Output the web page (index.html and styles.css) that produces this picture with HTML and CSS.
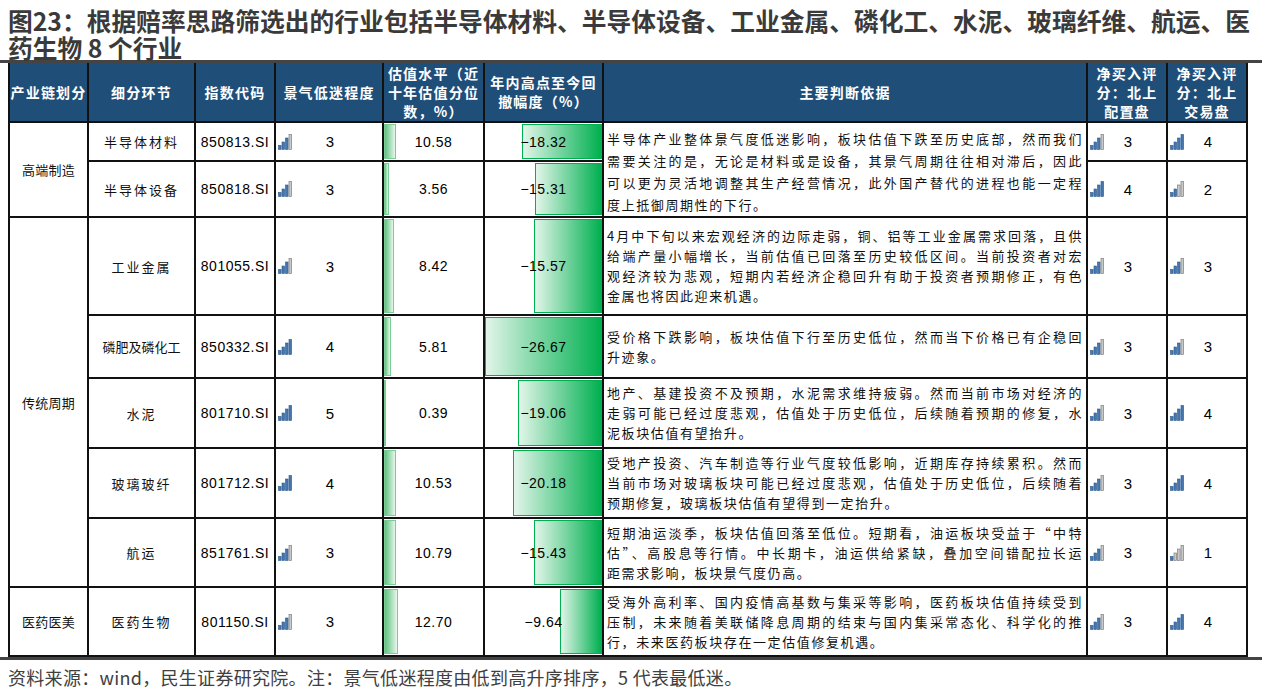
FILE: index.html
```
<!DOCTYPE html>
<html lang="zh-CN">
<head>
<meta charset="utf-8">
<title>图23</title>
<link rel="stylesheet" href="styles.css">
</head>
<body>
<div class="page">
  <h1 class="title"><span class="tl">图23：根据赔率思路筛选出的行业包括半导体材料、半导体设备、工业金属、磷化工、水泥、玻璃纤维、航运、医</span><span class="tl">药生物 8 个行业</span></h1>
  <div class="rule"></div>
  <div class="table">
    <div class="c h">产业链划分</div>
    <div class="c h">细分环节</div>
    <div class="c h">指数代码</div>
    <div class="c h">景气低迷程度</div>
    <div class="c h">估值水平（近<br>十年估值分位<br>数，%）</div>
    <div class="c h">年内高点至今回<br>撤幅度（%）</div>
    <div class="c h">主要判断依据</div>
    <div class="c h">净买入评<br>分：北上<br>配置盘</div>
    <div class="c h">净买入评<br>分：北上<br>交易盘</div>

    <!-- 半导体材料 -->
    <div class="c grp span2">高端制造</div>
    <div class="c sub">半导体材料</div>
    <div class="c code">850813.SI</div>
    <div class="c rate"><svg class="sig" viewBox="0 0 14 16"><rect class="on" x="0.5" y="11.5" width="2.6" height="4"/><rect class="on" x="4" y="8" width="2.6" height="7.5"/><rect class="on" x="7.5" y="4" width="2.6" height="11.5"/><rect class="off" x="11" y="0.5" width="2.6" height="15"/></svg><span class="rn">3</span></div>
    <div class="c barcell"><div class="vbar" style="width:11.7px"></div><span class="num">10.58</span></div>
    <div class="c barcell"><div class="dbar" style="width:68.7%"></div><span class="num">−18.32</span></div>
    <div class="c txt span2"><div class="para tall"><span class="ln">半导体产业整体景气度低迷影响，板块估值下跌至历史底部，然而我们</span><span class="ln">需要关注的是，无论是材料或是设备，其景气周期往往相对滞后，因此</span><span class="ln">可以更为灵活地调整其生产经营情况，此外国产替代的进程也能一定程</span><span class="ln end">度上抵御周期性的下行。</span></div></div>
    <div class="c rate"><svg class="sig" viewBox="0 0 14 16"><rect class="on" x="0.5" y="11.5" width="2.6" height="4"/><rect class="on" x="4" y="8" width="2.6" height="7.5"/><rect class="on" x="7.5" y="4" width="2.6" height="11.5"/><rect class="off" x="11" y="0.5" width="2.6" height="15"/></svg><span class="rn">3</span></div>
    <div class="c rate"><svg class="sig" viewBox="0 0 14 16"><rect class="on" x="0.5" y="11.5" width="2.6" height="4"/><rect class="on" x="4" y="8" width="2.6" height="7.5"/><rect class="on" x="7.5" y="4" width="2.6" height="11.5"/><rect class="on" x="11" y="0.5" width="2.6" height="15"/></svg><span class="rn">4</span></div>

    <!-- 半导体设备 -->
    <div class="c sub">半导体设备</div>
    <div class="c code">850818.SI</div>
    <div class="c rate"><svg class="sig" viewBox="0 0 14 16"><rect class="on" x="0.5" y="11.5" width="2.6" height="4"/><rect class="on" x="4" y="8" width="2.6" height="7.5"/><rect class="on" x="7.5" y="4" width="2.6" height="11.5"/><rect class="off" x="11" y="0.5" width="2.6" height="15"/></svg><span class="rn">3</span></div>
    <div class="c barcell"><div class="vbar" style="width:5.3px"></div><span class="num">3.56</span></div>
    <div class="c barcell"><div class="dbar" style="width:57.4%"></div><span class="num">−15.31</span></div>
    <div class="c rate"><svg class="sig" viewBox="0 0 14 16"><rect class="on" x="0.5" y="11.5" width="2.6" height="4"/><rect class="on" x="4" y="8" width="2.6" height="7.5"/><rect class="on" x="7.5" y="4" width="2.6" height="11.5"/><rect class="on" x="11" y="0.5" width="2.6" height="15"/></svg><span class="rn">4</span></div>
    <div class="c rate"><svg class="sig" viewBox="0 0 14 16"><rect class="on" x="0.5" y="11.5" width="2.6" height="4"/><rect class="on" x="4" y="8" width="2.6" height="7.5"/><rect class="off" x="7.5" y="4" width="2.6" height="11.5"/><rect class="off" x="11" y="0.5" width="2.6" height="15"/></svg><span class="rn">2</span></div>

    <!-- 工业金属 -->
    <div class="c grp span5">传统周期</div>
    <div class="c sub">工业金属</div>
    <div class="c code">801055.SI</div>
    <div class="c rate"><svg class="sig" viewBox="0 0 14 16"><rect class="on" x="0.5" y="11.5" width="2.6" height="4"/><rect class="on" x="4" y="8" width="2.6" height="7.5"/><rect class="on" x="7.5" y="4" width="2.6" height="11.5"/><rect class="off" x="11" y="0.5" width="2.6" height="15"/></svg><span class="rn">3</span></div>
    <div class="c barcell"><div class="vbar" style="width:9.7px"></div><span class="num">8.42</span></div>
    <div class="c barcell"><div class="dbar" style="width:58.4%"></div><span class="num">−15.57</span></div>
    <div class="c txt"><div class="para"><span class="ln">4月中下旬以来宏观经济的边际走弱，铜、铝等工业金属需求回落，且供</span><span class="ln">给端产量小幅增长，当前估值已回落至历史较低区间。当前投资者对宏</span><span class="ln">观经济较为悲观，短期内若经济企稳回升有助于投资者预期修正，有色</span><span class="ln end">金属也将因此迎来机遇。</span></div></div>
    <div class="c rate"><svg class="sig" viewBox="0 0 14 16"><rect class="on" x="0.5" y="11.5" width="2.6" height="4"/><rect class="on" x="4" y="8" width="2.6" height="7.5"/><rect class="on" x="7.5" y="4" width="2.6" height="11.5"/><rect class="off" x="11" y="0.5" width="2.6" height="15"/></svg><span class="rn">3</span></div>
    <div class="c rate"><svg class="sig" viewBox="0 0 14 16"><rect class="on" x="0.5" y="11.5" width="2.6" height="4"/><rect class="on" x="4" y="8" width="2.6" height="7.5"/><rect class="on" x="7.5" y="4" width="2.6" height="11.5"/><rect class="off" x="11" y="0.5" width="2.6" height="15"/></svg><span class="rn">3</span></div>

    <!-- 磷肥及磷化工 -->
    <div class="c sub tight">磷肥及磷化工</div>
    <div class="c code">850332.SI</div>
    <div class="c rate"><svg class="sig" viewBox="0 0 14 16"><rect class="on" x="0.5" y="11.5" width="2.6" height="4"/><rect class="on" x="4" y="8" width="2.6" height="7.5"/><rect class="on" x="7.5" y="4" width="2.6" height="11.5"/><rect class="on" x="11" y="0.5" width="2.6" height="15"/></svg><span class="rn">4</span></div>
    <div class="c barcell"><div class="vbar" style="width:7.3px"></div><span class="num">5.81</span></div>
    <div class="c barcell"><div class="dbar" style="width:100%"></div><span class="num">−26.67</span></div>
    <div class="c txt"><div class="para"><span class="ln">受价格下跌影响，板块估值下行至历史低位，然而当下价格已有企稳回</span><span class="ln end">升迹象。</span></div></div>
    <div class="c rate"><svg class="sig" viewBox="0 0 14 16"><rect class="on" x="0.5" y="11.5" width="2.6" height="4"/><rect class="on" x="4" y="8" width="2.6" height="7.5"/><rect class="on" x="7.5" y="4" width="2.6" height="11.5"/><rect class="off" x="11" y="0.5" width="2.6" height="15"/></svg><span class="rn">3</span></div>
    <div class="c rate"><svg class="sig" viewBox="0 0 14 16"><rect class="on" x="0.5" y="11.5" width="2.6" height="4"/><rect class="on" x="4" y="8" width="2.6" height="7.5"/><rect class="on" x="7.5" y="4" width="2.6" height="11.5"/><rect class="off" x="11" y="0.5" width="2.6" height="15"/></svg><span class="rn">3</span></div>

    <!-- 水泥 -->
    <div class="c sub">水泥</div>
    <div class="c code">801710.SI</div>
    <div class="c rate"><svg class="sig" viewBox="0 0 14 16"><rect class="on" x="0.5" y="11.5" width="2.6" height="4"/><rect class="on" x="4" y="8" width="2.6" height="7.5"/><rect class="on" x="7.5" y="4" width="2.6" height="11.5"/><rect class="on" x="11" y="0.5" width="2.6" height="15"/></svg><span class="rn">5</span></div>
    <div class="c barcell"><div class="vbar" style="width:2.4px"></div><span class="num">0.39</span></div>
    <div class="c barcell"><div class="dbar" style="width:71.5%"></div><span class="num">−19.06</span></div>
    <div class="c txt"><div class="para"><span class="ln">地产、基建投资不及预期，水泥需求维持疲弱。然而当前市场对经济的</span><span class="ln">走弱可能已经过度悲观，估值处于历史低位，后续随着预期的修复，水</span><span class="ln end">泥板块估值有望抬升。</span></div></div>
    <div class="c rate"><svg class="sig" viewBox="0 0 14 16"><rect class="on" x="0.5" y="11.5" width="2.6" height="4"/><rect class="on" x="4" y="8" width="2.6" height="7.5"/><rect class="on" x="7.5" y="4" width="2.6" height="11.5"/><rect class="off" x="11" y="0.5" width="2.6" height="15"/></svg><span class="rn">3</span></div>
    <div class="c rate"><svg class="sig" viewBox="0 0 14 16"><rect class="on" x="0.5" y="11.5" width="2.6" height="4"/><rect class="on" x="4" y="8" width="2.6" height="7.5"/><rect class="on" x="7.5" y="4" width="2.6" height="11.5"/><rect class="on" x="11" y="0.5" width="2.6" height="15"/></svg><span class="rn">4</span></div>

    <!-- 玻璃玻纤 -->
    <div class="c sub">玻璃玻纤</div>
    <div class="c code">801712.SI</div>
    <div class="c rate"><svg class="sig" viewBox="0 0 14 16"><rect class="on" x="0.5" y="11.5" width="2.6" height="4"/><rect class="on" x="4" y="8" width="2.6" height="7.5"/><rect class="on" x="7.5" y="4" width="2.6" height="11.5"/><rect class="on" x="11" y="0.5" width="2.6" height="15"/></svg><span class="rn">4</span></div>
    <div class="c barcell"><div class="vbar" style="width:11.7px"></div><span class="num">10.53</span></div>
    <div class="c barcell"><div class="dbar" style="width:75.7%"></div><span class="num">−20.18</span></div>
    <div class="c txt"><div class="para"><span class="ln">受地产投资、汽车制造等行业气度较低影响，近期库存持续累积。然而</span><span class="ln">当前市场对玻璃板块可能已经过度悲观，估值处于历史低位，后续随着</span><span class="ln end">预期修复，玻璃板块估值有望得到一定抬升。</span></div></div>
    <div class="c rate"><svg class="sig" viewBox="0 0 14 16"><rect class="on" x="0.5" y="11.5" width="2.6" height="4"/><rect class="on" x="4" y="8" width="2.6" height="7.5"/><rect class="on" x="7.5" y="4" width="2.6" height="11.5"/><rect class="off" x="11" y="0.5" width="2.6" height="15"/></svg><span class="rn">3</span></div>
    <div class="c rate"><svg class="sig" viewBox="0 0 14 16"><rect class="on" x="0.5" y="11.5" width="2.6" height="4"/><rect class="on" x="4" y="8" width="2.6" height="7.5"/><rect class="on" x="7.5" y="4" width="2.6" height="11.5"/><rect class="on" x="11" y="0.5" width="2.6" height="15"/></svg><span class="rn">4</span></div>

    <!-- 航运 -->
    <div class="c sub">航运</div>
    <div class="c code">851761.SI</div>
    <div class="c rate"><svg class="sig" viewBox="0 0 14 16"><rect class="on" x="0.5" y="11.5" width="2.6" height="4"/><rect class="on" x="4" y="8" width="2.6" height="7.5"/><rect class="on" x="7.5" y="4" width="2.6" height="11.5"/><rect class="off" x="11" y="0.5" width="2.6" height="15"/></svg><span class="rn">3</span></div>
    <div class="c barcell"><div class="vbar" style="width:11.9px"></div><span class="num">10.79</span></div>
    <div class="c barcell"><div class="dbar" style="width:57.9%"></div><span class="num">−15.43</span></div>
    <div class="c txt"><div class="para"><span class="ln">短期油运淡季，板块估值回落至低位。短期看，油运板块受益于“中特</span><span class="ln">估”、高股息等行情。中长期卡，油运供给紧缺，叠加空间错配拉长运</span><span class="ln end">距需求影响，板块景气度仍高。</span></div></div>
    <div class="c rate"><svg class="sig" viewBox="0 0 14 16"><rect class="on" x="0.5" y="11.5" width="2.6" height="4"/><rect class="on" x="4" y="8" width="2.6" height="7.5"/><rect class="on" x="7.5" y="4" width="2.6" height="11.5"/><rect class="off" x="11" y="0.5" width="2.6" height="15"/></svg><span class="rn">3</span></div>
    <div class="c rate"><svg class="sig" viewBox="0 0 14 16"><rect class="on" x="0.5" y="11.5" width="2.6" height="4"/><rect class="off" x="4" y="8" width="2.6" height="7.5"/><rect class="off" x="7.5" y="4" width="2.6" height="11.5"/><rect class="off" x="11" y="0.5" width="2.6" height="15"/></svg><span class="rn">1</span></div>

    <!-- 医药生物 -->
    <div class="c grp">医药医美</div>
    <div class="c sub">医药生物</div>
    <div class="c code">801150.SI</div>
    <div class="c rate"><svg class="sig" viewBox="0 0 14 16"><rect class="on" x="0.5" y="11.5" width="2.6" height="4"/><rect class="on" x="4" y="8" width="2.6" height="7.5"/><rect class="on" x="7.5" y="4" width="2.6" height="11.5"/><rect class="off" x="11" y="0.5" width="2.6" height="15"/></svg><span class="rn">3</span></div>
    <div class="c barcell"><div class="vbar" style="width:13.7px"></div><span class="num">12.70</span></div>
    <div class="c barcell"><div class="dbar" style="width:36.1%"></div><span class="num">−9.64</span></div>
    <div class="c txt"><div class="para"><span class="ln">受海外高利率、国内疫情高基数与集采等影响，医药板块估值持续受到</span><span class="ln">压制，未来随着美联储降息周期的结束与国内集采常态化、科学化的推</span><span class="ln end">行，未来医药板块存在一定估值修复机遇。</span></div></div>
    <div class="c rate"><svg class="sig" viewBox="0 0 14 16"><rect class="on" x="0.5" y="11.5" width="2.6" height="4"/><rect class="on" x="4" y="8" width="2.6" height="7.5"/><rect class="on" x="7.5" y="4" width="2.6" height="11.5"/><rect class="off" x="11" y="0.5" width="2.6" height="15"/></svg><span class="rn">3</span></div>
    <div class="c rate"><svg class="sig" viewBox="0 0 14 16"><rect class="on" x="0.5" y="11.5" width="2.6" height="4"/><rect class="on" x="4" y="8" width="2.6" height="7.5"/><rect class="on" x="7.5" y="4" width="2.6" height="11.5"/><rect class="on" x="11" y="0.5" width="2.6" height="15"/></svg><span class="rn">4</span></div>
  </div>
  <div class="rule"></div>
  <p class="source">资料来源：wind，民生证券研究院。注：景气低迷程度由低到高升序排序，5 代表最低迷。</p>
</div>
</body>
</html>
```

FILE: styles.css
```
* { box-sizing: border-box; }
body {
  margin: 0;
  background: #ffffff;
  font-family: "Noto Sans CJK SC", "Noto Sans", sans-serif;
  color: #000;
}
.page { width: 1270px; height: 699px; overflow: hidden; }

.title {
  margin: 0;
  height: 60px;
  padding: 7px 0 0 8px;
  font-size: 24.75px;
  font-weight: 700;
  color: #3a3a3a;
  white-space: nowrap;
}
.tl { display: block; height: 26.5px; line-height: 26px; }
.rule { width: 1262px; height: 3px; background: #444444; }

.table {
  margin-left: 8px;
  width: 1240px;
  display: grid;
  grid-template-columns: 79px 107px 80px 108px 101px 119px 484px 80px 80px;
  grid-template-rows: 60px 39px 56px 98px 63px 70px 70px 69px 69px;
  border-left: 2px solid #111;
}
.c {
  border-right: 2px solid #111;
  border-bottom: 2px solid #111;
  display: flex;
  align-items: center;
  justify-content: center;
  text-align: center;
  min-width: 0;
}
.span2 { grid-row: span 2; }
.span5 { grid-row: span 5; }

.h {
  background: #1f4e79;
  color: #ffffff;
  font-weight: 700;
  font-size: 14px;
  letter-spacing: 1.2px;
  line-height: 19px;
}

.grp { font-size: 13px; letter-spacing: 0.3px; color: #111; }
.sub { font-size: 13px; letter-spacing: 2px; color: #111; }
.sub.tight { letter-spacing: 0; }
.code { font-family: "Liberation Sans", Arial, sans-serif; font-size: 14px; letter-spacing: 0.5px; }

.rate {
  display: grid;
  grid-template-columns: 1fr auto 1fr;
  align-items: center;
  padding-left: 2px;
}
.sig { width: 14px; height: 16px; justify-self: start; display: block; }
.sig .on { fill: #4677b0; stroke: #2c5a8c; stroke-width: 0.6; }
.sig .off { fill: #c9c9c9; stroke: #7f7f7f; stroke-width: 0.7; }
.rn { font-family: "Liberation Sans", Arial, sans-serif; font-size: 15px; }

.barcell {
  display: grid;
  grid-template-columns: 100%;
  grid-template-rows: 100%;
  justify-content: stretch;
  align-content: stretch;
  align-items: stretch;
  justify-items: stretch;
  padding: 1px 0;
}
.barcell > * { grid-area: 1 / 1; }
.vbar {
  justify-self: start;
  align-self: stretch;
  background: linear-gradient(to right, #5fc27f, #e6f6eb);
  border: 1px solid #79cd95;
  min-width: 2px;
}
.dbar {
  justify-self: end;
  align-self: stretch;
  background: linear-gradient(to right, #e2f5e9, #00b050);
  border: 1px solid #00b050;
}
.num {
  place-self: center;
  font-family: "Liberation Sans", Arial, sans-serif;
  font-size: 14px;
  letter-spacing: 0.5px;
}

.txt { justify-content: stretch; padding: 0 3px 0 3px; }
.para {
  width: 100%;
  font-size: 13px;
  letter-spacing: 1.6px;
  line-height: 20px;
  color: #111;
}
.para.tall { line-height: 22px; padding-top: 5px; }
.ln { display: block; text-align: justify; text-align-last: justify; white-space: nowrap; }
.ln.end { text-align: left; text-align-last: left; }

.source {
  margin: 5px 0 0 8px;
  font-size: 18px;
  letter-spacing: 0.3px;
  line-height: 24px;
  color: #404040;
  white-space: nowrap;
}
```
